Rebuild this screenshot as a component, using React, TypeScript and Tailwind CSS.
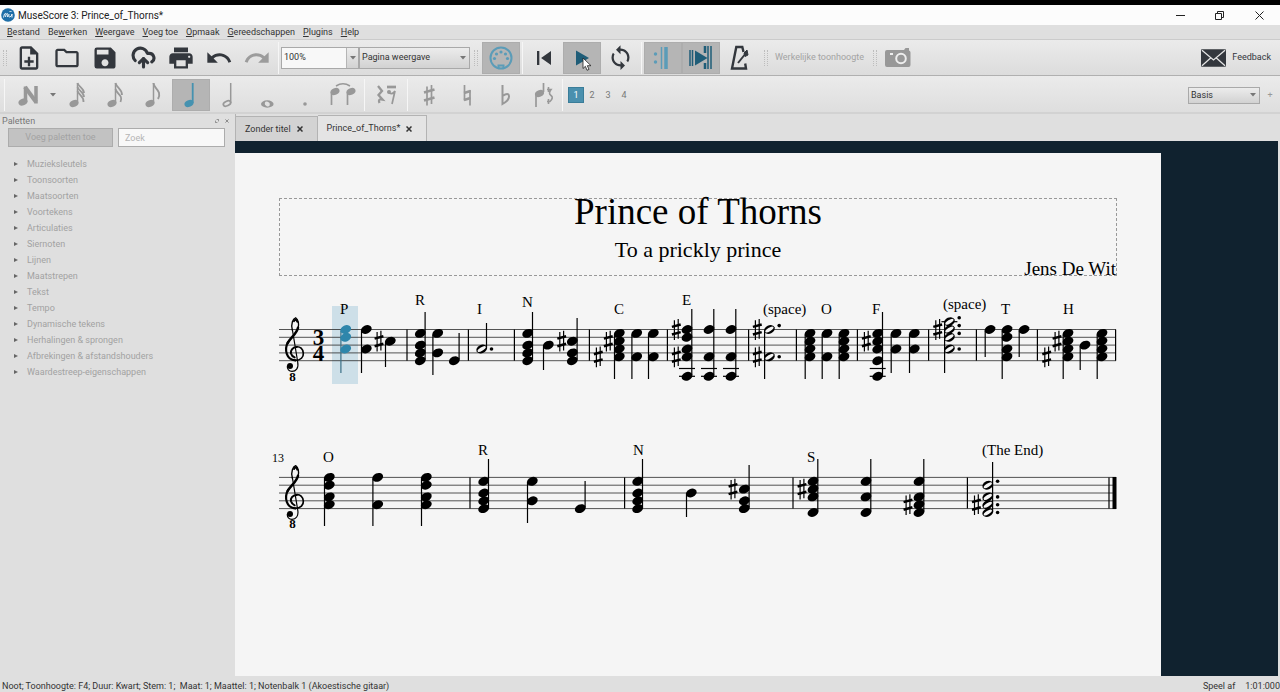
import React, { ReactNode } from 'react';
import { CloudUpload } from 'lucide-react';
import {
  MdLoop,
  MdOutlineFolder,
  MdOutlineNoteAdd,
  MdPrint,
  MdRedo,
  MdSave,
  MdSkipPrevious,
  MdUndo,
} from 'react-icons/md';

interface Chord {
  x: number;
  steps: number[];
  stem: number;
  up?: boolean;
  half?: boolean;
  selected?: boolean;
  dots?: number[];
  ledgers?: number[];
}

interface Label {
  x: number;
  y: number;
  text: string;
}

interface StaffSystem {
  top: number;
  chords: Chord[];
  sharps: [number, number][];
  bars: number[];
  labels: Label[];
}

const HALF_SPACE = 3.9;

// steps count downwards from the top staff line, two per staff space
const systems: StaffSystem[] = [
  {
    top: 329.5,
    chords: [
      { x: 345.7, steps: [0, 2, 5], stem: 373, selected: true },
      { x: 366.3, steps: [0, 5], stem: 373 },
      { x: 390.3, steps: [3], stem: 367 },
      { x: 420.3, steps: [1, 4, 6, 8], stem: 312, up: true },
      { x: 437.7, steps: [1, 6], stem: 375 },
      { x: 454.3, steps: [8], stem: 333, up: true },
      { x: 481.7, steps: [5], stem: 323, up: true, half: true, dots: [5] },
      { x: 527.7, steps: [1, 4, 6, 8], stem: 312, up: true },
      { x: 548.3, steps: [4], stem: 370 },
      { x: 572.3, steps: [3, 6, 8], stem: 318, up: true },
      { x: 619.3, steps: [1, 3, 5, 7], stem: 379 },
      { x: 636.7, steps: [1, 7], stem: 379 },
      { x: 653.3, steps: [1, 7], stem: 379 },
      { x: 687, steps: [0, 2, 5, 7, 12], stem: 309, up: true, ledgers: [10, 12] },
      { x: 709, steps: [0, 7, 12], stem: 309, up: true, ledgers: [10, 12] },
      { x: 731, steps: [0, 7, 12], stem: 309, up: true, ledgers: [10, 12] },
      { x: 769.4, steps: [0, 7], stem: 379, half: true, dots: [-1, 7] },
      { x: 810, steps: [1, 3, 5, 7], stem: 379 },
      { x: 827, steps: [1, 7], stem: 379 },
      { x: 844, steps: [1, 3, 5, 7], stem: 379 },
      { x: 877.7, steps: [1, 3, 5, 8, 12], stem: 312, up: true, ledgers: [10, 12] },
      { x: 896, steps: [1, 5], stem: 373 },
      { x: 914.3, steps: [1, 5], stem: 373 },
      { x: 949.4, steps: [-2, 0, 2, 5], stem: 373, half: true, dots: [-3, -1, 1, 5], ledgers: [-2] },
      { x: 990, steps: [0], stem: 357 },
      { x: 1007, steps: [0, 2, 5, 7], stem: 379 },
      { x: 1024, steps: [0], stem: 357 },
      { x: 1068, steps: [1, 3, 5, 7], stem: 379 },
      { x: 1085, steps: [4], stem: 370 },
      { x: 1102, steps: [1, 3, 5, 7], stem: 379 },
    ],
    sharps: [
      [379, 3], [561.7, 3], [598.3, 7], [608.3, 3], [676.3, 0], [676.3, 7],
      [757.3, 0], [757.3, 7], [866.3, 3], [937.7, 0], [1046.7, 7], [1057, 3],
    ],
    bars: [407, 468.4, 514.4, 589.4, 667.4, 748.6, 796.4, 857.4, 928.6, 976.4, 1037.4, 1115.6],
    labels: [
      { x: 340, y: 314, text: 'P' },
      { x: 415, y: 305, text: 'R' },
      { x: 477, y: 314, text: 'I' },
      { x: 522, y: 307, text: 'N' },
      { x: 614, y: 314, text: 'C' },
      { x: 682, y: 305, text: 'E' },
      { x: 763, y: 314, text: '(space)' },
      { x: 821, y: 314, text: 'O' },
      { x: 872, y: 314, text: 'F' },
      { x: 943, y: 309, text: '(space)' },
      { x: 1001, y: 314, text: 'T' },
      { x: 1063, y: 314, text: 'H' },
    ],
  },
  {
    top: 477.4,
    chords: [
      { x: 329.3, steps: [0, 2, 5, 7], stem: 526 },
      { x: 377.7, steps: [0, 7], stem: 526 },
      { x: 426.3, steps: [0, 2, 5, 7], stem: 526 },
      { x: 483.7, steps: [1, 4, 6, 8], stem: 459, up: true },
      { x: 532.3, steps: [1, 6], stem: 523 },
      { x: 580.3, steps: [8], stem: 481, up: true },
      { x: 637.7, steps: [1, 4, 6, 8], stem: 459, up: true },
      { x: 691.3, steps: [4], stem: 517 },
      { x: 744.3, steps: [3, 6, 8], stem: 465, up: true },
      { x: 813, steps: [1, 3, 5, 9], stem: 459, up: true },
      { x: 866, steps: [1, 5, 9], stem: 459, up: true },
      { x: 919, steps: [1, 5, 7, 9], stem: 459, up: true },
      { x: 987.8, steps: [2, 5, 7, 9], stem: 462, up: true, half: true, dots: [1, 5, 7, 9] },
    ],
    sharps: [[733, 3], [802, 3], [908, 7], [976.4, 7]],
    bars: [470, 624.6, 793, 967.4, 1109],
    labels: [
      { x: 323, y: 462, text: 'O' },
      { x: 478, y: 455, text: 'R' },
      { x: 633, y: 455, text: 'N' },
      { x: 807, y: 462, text: 'S' },
      { x: 982, y: 455, text: '(The End)' },
    ],
  },
];

const palettes = [
  'Muzieksleutels',
  'Toonsoorten',
  'Maatsoorten',
  'Voortekens',
  'Articulaties',
  'Siernoten',
  'Lijnen',
  'Maatstrepen',
  'Tekst',
  'Tempo',
  'Dynamische tekens',
  'Herhalingen & sprongen',
  'Afbrekingen & afstandshouders',
  'Waardestreep-eigenschappen',
];

// [before, mnemonic, after]
const menus = [
  ['', 'B', 'estand'],
  ['Be', 'w', 'erken'],
  ['', 'W', 'eergave'],
  ['', 'V', 'oeg toe'],
  ['', 'O', 'pmaak'],
  ['', 'G', 'ereedschappen'],
  ['', 'P', 'lugins'],
  ['', 'H', 'elp'],
];

function Clef({ top }: { top: number }) {
  return (
    <g transform={`translate(270 ${top - 44.4}) scale(0.3333)`} fill="none" stroke="#000" strokeLinecap="round">
      <path d="M67 133L83 230C87 250 77 259 66 259C57 259 51 252 52 243" strokeWidth="3.5" />
      <path d="M67 135C62 115 69 101 77 98C85 103 88 117 84 130" strokeWidth="4" />
      <path d="M72 108C76 101 80 103 82 110" strokeWidth="6" />
      <path d="M84 128C80 147 62 157 53 174" strokeWidth="7.5" />
      <path d="M54 171C42 194 49 224 76 226" strokeWidth="6.5" />
      <path d="M76 226C92 226 101 216 100 204C99 191 90 184 80 185" strokeWidth="5" />
      <path d="M80 186C67 187 61 196 63 205C65 212 69 215 74 217" strokeWidth="6" />
      <circle cx="60" cy="243" r="9" fill="#000" stroke="none" />
    </g>
  );
}

function ChordShape({ chord, top }: { chord: Chord; top: number }) {
  const color = chord.selected ? '#2e86ab' : '#000';
  const y = (step: number) => top + step * HALF_SPACE;
  const stemX = chord.up ? chord.x + 4.8 : chord.x - 4.8;
  const stemStart = chord.up ? y(Math.max(...chord.steps)) - 1 : y(Math.min(...chord.steps)) + 1;

  return (
    <g>
      {chord.ledgers?.map((step) => (
        <path key={step} d={`M${chord.x - 8} ${y(step)}h16`} stroke="#000" strokeWidth="1.2" />
      ))}
      <path
        d={`M${stemX} ${stemStart}V${chord.stem}`}
        stroke={chord.selected ? '#3b6f86' : '#000'}
        strokeWidth="1.2"
      />
      {chord.steps.map((step) => (
        <g key={step} transform={`translate(${chord.x} ${y(step)}) rotate(-24)`}>
          <ellipse rx="5.6" ry="4.2" fill={color} />
          {chord.half && <ellipse rx="4.7" ry="1.8" fill="#f5f5f5" transform="rotate(-8)" />}
        </g>
      ))}
      {chord.dots?.map((step) => (
        <circle key={step} cx={chord.x + 9.8} cy={y(step)} r="1.8" />
      ))}
    </g>
  );
}

function Score() {
  return (
    <svg
      viewBox="235 285 926 255"
      className="block w-full font-['Liberation_Serif',serif]"
      role="img"
      aria-label="Prince of Thorns"
    >
      <rect x="332" y="306" width="26" height="78" fill="#cddfe8" />
      {systems.map((system) => (
        <g key={system.top}>
          {[0, 2, 4, 6, 8].map((step) => (
            <path
              key={step}
              d={`M279 ${system.top + step * HALF_SPACE}H1116`}
              stroke="#2a2a2a"
              strokeWidth="0.8"
            />
          ))}
          <Clef top={system.top} />
          <text x="292.5" y={system.top + 51} fontSize="13" fontWeight="bold" textAnchor="middle">
            8
          </text>
          {system.bars.map((x) => (
            <path key={x} d={`M${x} ${system.top}v31.2`} stroke="#000" strokeWidth="1.2" />
          ))}
          {system.sharps.map(([x, step]) => (
            <g
              key={`${x}-${step}`}
              transform={`translate(${x} ${system.top + step * HALF_SPACE})`}
              stroke="#000"
            >
              <path d="M-1.9 -9.2V10.4M1.9 -10.4V9.2" strokeWidth="1.2" />
              <path d="M-4.4 -2.6L4.4 -5M-4.4 5L4.4 2.6" strokeWidth="2.5" />
            </g>
          ))}
          {system.chords.map((chord) => (
            <ChordShape key={chord.x} chord={chord} top={system.top} />
          ))}
          {system.labels.map((label) => (
            <text key={label.x} x={label.x} y={label.y} fontSize="15">
              {label.text}
            </text>
          ))}
        </g>
      ))}
      <g fontSize="23" fontWeight="bold" textAnchor="middle">
        <text x="318.5" y="345">3</text>
        <text x="318.5" y="361">4</text>
      </g>
      <text x="272" y="462" fontSize="12">
        13
      </text>
      <path d="M1114.5 477v32" stroke="#000" strokeWidth="4" />
    </svg>
  );
}

function IconButton({ label, pressed, children }: { label: string; pressed?: boolean; children: ReactNode }) {
  return (
    <button
      aria-label={label}
      aria-pressed={pressed}
      className={`relative flex h-8 w-[38px] shrink-0 items-center justify-center ${
        pressed ? 'border border-[#adadad] bg-[#b5b5b5]' : ''
      }`}
    >
      {children}
    </button>
  );
}

function Glyph({ children, color = '#989898' }: { children: ReactNode; color?: string }) {
  return (
    <svg width="38" height="32" viewBox="0 0 38 32" fill="none" stroke={color} className="shrink-0">
      {children}
    </svg>
  );
}

function Head({ x, y, color = '#989898', hollow }: { x: number; y: number; color?: string; hollow?: boolean }) {
  return (
    <ellipse
      cx={x}
      cy={y}
      rx={hollow ? 3.9 : 4.7}
      ry={hollow ? 2.3 : 3.3}
      fill={hollow ? 'none' : color}
      stroke={hollow ? color : 'none'}
      strokeWidth="1.7"
      transform={`rotate(-25 ${x} ${y})`}
    />
  );
}

function Separator() {
  return <div className="h-8 w-px shrink-0 bg-[#f6f6f6]" />;
}

function Grip() {
  return <div className="h-4 w-1 shrink-0 border-x border-dotted border-[#bdbdbd]" />;
}

function Caret({ className = '' }: { className?: string }) {
  return (
    <svg width="6" height="4" viewBox="0 0 6 4" className={className}>
      <path d="M0 0h6L3 3.5z" fill="#777" />
    </svg>
  );
}

function Dropdown({ label, value, className }: { label: string; value: string; className: string }) {
  return (
    <div className={`relative shrink-0 ${className}`}>
      <select
        aria-label={label}
        className="h-full w-full appearance-none border border-[#a9a9a9] bg-linear-to-b from-[#ececec] to-[#d2d2d2] pl-[2px] text-[#333]"
      >
        <option>{value}</option>
      </select>
      <Caret className="pointer-events-none absolute top-1/2 right-1 -translate-y-1/2" />
    </div>
  );
}

function Toolbar() {
  return (
    <div className="flex h-[37px] shrink-0 items-center border-t border-b border-t-[#cbcbcb] border-b-[#b0b0b0] bg-linear-to-b from-[#ebebeb] to-[#dcdcdc] text-[#33373d]">
      <div className="flex w-[10px] shrink-0 justify-center">
        <Grip />
      </div>
      <IconButton label="Nieuw"><MdOutlineNoteAdd size={28} /></IconButton>
      <IconButton label="Openen"><MdOutlineFolder size={28} /></IconButton>
      <IconButton label="Opslaan"><MdSave size={28} /></IconButton>
      <IconButton label="Online opslaan"><CloudUpload size={25} strokeWidth={3} /></IconButton>
      <IconButton label="Afdrukken"><MdPrint size={28} /></IconButton>
      <IconButton label="Ongedaan maken"><MdUndo size={28} /></IconButton>
      <IconButton label="Opnieuw"><MdRedo size={28} className="text-[#9c9c9c]" /></IconButton>
      <div className="mx-[2px]">
        <Separator />
      </div>
      <div className="relative h-[22px] w-[78px] shrink-0">
        <select
          aria-label="Zoom"
          className="h-full w-full appearance-none border border-[#a9a9a9] bg-[#f8f8f8] pl-[2px] text-[#333]"
        >
          <option>100%</option>
        </select>
        <div className="pointer-events-none absolute inset-y-px right-px flex w-3 items-center justify-center border-l border-[#b5b5b5] bg-linear-to-b from-[#ececec] to-[#d2d2d2]">
          <Caret />
        </div>
      </div>
      <Dropdown label="Weergave" value="Pagina weergave" className="h-[22px] w-[111px]" />
      <div className="flex w-3 shrink-0 justify-center">
        <Grip />
      </div>
      <IconButton label="MIDI-invoer" pressed>
        <Glyph color="#5b9cb8">
          <circle cx="19" cy="16" r="10.5" strokeWidth="2" />
          <path d="M16.5 26v-2.5h5V26" strokeWidth="2" />
          <g fill="#5b9cb8" stroke="none">
            <circle cx="12.5" cy="16.5" r="1.6" />
            <circle cx="14.5" cy="12" r="1.6" />
            <circle cx="19" cy="10" r="1.6" />
            <circle cx="23.5" cy="12" r="1.6" />
            <circle cx="25.5" cy="16.5" r="1.6" />
          </g>
        </Glyph>
      </IconButton>
      <div className="mx-[2px]">
        <Separator />
      </div>
      <IconButton label="Naar begin"><MdSkipPrevious size={28} /></IconButton>
      <IconButton label="Afspelen" pressed>
        <Glyph>
          <path d="M13 8.5v15L26 16z" fill="#1f5d78" stroke="none" />
        </Glyph>
        <svg width="10" height="14" viewBox="0 0 10 14" className="absolute top-[14px] left-[18px]">
          <path
            d="M1 1v10.5l2.4-2.2L5 13.3l2-.9-1.7-3.7H9z"
            fill="#fff"
            stroke="#222"
            strokeWidth="0.8"
          />
        </svg>
      </IconButton>
      <IconButton label="Herhalen"><MdLoop size={27} /></IconButton>
      <div className="mx-[2px]">
        <Separator />
      </div>
      <IconButton label="Herhalingen afspelen" pressed>
        <Glyph color="#5b9cb8">
          <path d="M17.5 5v22" strokeWidth="1.5" />
          <path d="M22 5v22" strokeWidth="3.5" />
          <g fill="#5b9cb8" stroke="none">
            <circle cx="11.5" cy="12" r="1.7" />
            <circle cx="11.5" cy="20" r="1.7" />
          </g>
        </Glyph>
      </IconButton>
      <IconButton label="Panorama" pressed>
        <Glyph color="#1f5d78">
          <path d="M8 8v16M10.5 8v16" strokeWidth="1.5" />
          <path d="M23 4v7M23 21v6" strokeWidth="2.5" />
          <path d="M26 4v23M29 4v23" strokeWidth="1.5" />
          <path d="M13 8.5v15L25.5 16z" fill="#1f5d78" stroke="none" />
        </Glyph>
      </IconButton>
      <IconButton label="Metronoom">
        <Glyph color="#33373d">
          <path d="M23.5 10l-1.2-5h-6L12 26.500h14l-.8-5" strokeWidth="2.4" />
          <path d="M18 21l8-10" strokeWidth="2" />
          <path d="M24 11l3-3 1 5-3 1.500z" fill="#33373d" />
        </Glyph>
      </IconButton>
      <div className="ml-[3px] flex w-[10px] shrink-0 justify-center">
        <Grip />
      </div>
      <button className="ml-1 shrink-0 text-[#a3a3a3]" disabled>
        Werkelijke toonhoogte
      </button>
      <div className="ml-2 flex w-[6px] shrink-0 justify-center">
        <Grip />
      </div>
      <button aria-label="Schermopname" className="ml-[7px] shrink-0">
        <svg width="26" height="20" viewBox="0 0 26 20">
          <path
            d="M2 2h17l1.500-2H24v2.500q1.500.500 1.500 2V17q0 2-2 2H2q-2 0-2-2V4q0-2 2-2z"
            fill="#989898"
          />
          <circle cx="16" cy="10.5" r="4.8" fill="#989898" stroke="#eee" strokeWidth="2" />
          <rect x="5" y="5" width="3" height="2" fill="#eee" />
        </svg>
      </button>
      <button className="mr-[9px] ml-auto flex shrink-0 items-center gap-[6px]">
        <svg width="25" height="18" viewBox="0 0 26 18">
          <rect width="26" height="18" rx="1" fill="#33373d" />
          <path d="M1 1l12 10L25 1M1 17l9-8M25 17l-9-8" fill="none" stroke="#e6e6e6" strokeWidth="1.3" />
        </svg>
        Feedback
      </button>
    </div>
  );
}

function NoteToolbar() {
  return (
    <div className="flex h-[38px] shrink-0 items-center border-b-2 border-[#d2d2d2] bg-linear-to-b from-[#ebebeb] to-[#dedede] pt-[2px]">
      <div className="flex w-[9px] shrink-0 justify-center">
        <Separator />
      </div>
      <IconButton label="Nooteninvoer">
        <Glyph>
          <path d="M16.500 23V7.500M27 7v17.500" strokeWidth="3.500" />
          <path d="M16 8l11 15" strokeWidth="4" />
          <Head x={14} y={23} />
        </Glyph>
      </IconButton>
      <div className="flex w-[11px] shrink-0 justify-center">
        <Caret />
      </div>
      <IconButton label="32e noot">
        <Glyph>
          <Head x={16} y={24.5} />
          <path d="M19.5 4v20" strokeWidth="1.5" />
          <path d="M19.5 4c1 4 6.5 5 6.5 10M19.5 8c1 4 6.5 5 6.5 10M19.5 12c1 4 6.500 5 6 11" strokeWidth="1.8" />
        </Glyph>
      </IconButton>
      <IconButton label="16e noot">
        <Glyph>
          <Head x={16} y={24.5} />
          <path d="M19.5 4v20" strokeWidth="1.5" />
          <path d="M19.5 4c1 5 6.5 5.500 6.5 12M19.5 10c1 5 8 6 5 13" strokeWidth="1.8" />
        </Glyph>
      </IconButton>
      <IconButton label="Achtste noot">
        <Glyph>
          <Head x={16} y={24.5} />
          <path d="M19.5 4v20" strokeWidth="1.5" />
          <path d="M19.5 4c0 6 9 7 4.5 16" strokeWidth="1.9" />
        </Glyph>
      </IconButton>
      <IconButton label="Kwartnoot" pressed>
        <Glyph>
          <Head x={17} y={24.5} color="#4592b0" />
          <path d="M20.700 4v20" stroke="#4592b0" strokeWidth="1.8" />
        </Glyph>
      </IconButton>
      <IconButton label="Halve noot">
        <Glyph>
          <Head x={17} y={24.5} hollow />
          <path d="M20.700 4v20" strokeWidth="1.5" />
        </Glyph>
      </IconButton>
      <IconButton label="Hele noot">
        <Glyph>
          <path
            d="M13 25a6.300 3.700 0 1 0 12.600 0a6.300 3.700 0 1 0-12.600 0zM16.800 24a2.400 1.900 35 1 1 5 2a2.400 1.900 35 1 1-5-2z"
            fill="#989898"
            fillRule="evenodd"
            stroke="none"
          />
        </Glyph>
      </IconButton>
      <IconButton label="Punt">
        <Glyph>
          <circle cx="19" cy="25" r="1.8" fill="#989898" stroke="none" />
        </Glyph>
      </IconButton>
      <IconButton label="Overbinding">
        <Glyph>
          <Head x={11} y={12.5} />
          <Head x={27} y={12.5} />
          <path d="M7.5 13v13M23.5 13v13" strokeWidth="1.7" />
          <path d="M12 7q7-4.500 14 0" strokeWidth="1.5" />
        </Glyph>
      </IconButton>
      <div className="mx-[2px]">
        <Separator />
      </div>
      <IconButton label="Rust">
        <Glyph>
          <path d="M11 7l4 5-3.500 4 4 4.500q-5-1-3 3.500" strokeWidth="2.300" />
          <path d="M20 8h9" strokeWidth="2.700" />
          <path d="M22 14q4 2 6-2l-3 13" strokeWidth="1.700" />
          <circle cx="22" cy="13" r="2" fill="#989898" stroke="none" />
        </Glyph>
      </IconButton>
      <div className="mx-[2px]">
        <Separator />
      </div>
      <IconButton label="Kruis">
        <Glyph>
          <path d="M17 7.500v19M21.500 6v19" strokeWidth="1.700" />
          <path d="M14 13.500l10.500-3M14 21.500l10.500-3" strokeWidth="2.600" />
        </Glyph>
      </IconButton>
      <IconButton label="Herstellingsteken">
        <Glyph>
          <path d="M16.500 6v15.500M22 11v15.500" strokeWidth="1.700" />
          <path d="M16 14l6.500-2M16 21l6.500-2" strokeWidth="2.600" />
        </Glyph>
      </IconButton>
      <IconButton label="Mol">
        <Glyph>
          <path d="M16.500 6v19q7-4 6.500-8t-6.500 0" strokeWidth="2" />
        </Glyph>
      </IconButton>
      <IconButton label="Richting omkeren">
        <Glyph>
          <Head x={15.5} y={14.5} />
          <path d="M12 15v13M19.500 13V4" strokeWidth="1.700" />
          <path d="M23 10.500h4q-3 4 0 6t-1 6h-3M24.500 8v5M24.500 20v5" strokeWidth="1.600" />
        </Glyph>
      </IconButton>
      <div className="mr-[5px]">
        <Separator />
      </div>
      <button className="h-4 w-4 border border-[#3a7d99] bg-[#4a90ae] text-white">1</button>
      {[2, 3, 4].map((voice) => (
        <button key={voice} className="h-4 w-4 text-[#777]">
          {voice}
        </button>
      ))}
      <Dropdown label="Werkruimte" value="Basis" className="ml-auto h-[17px] w-[72px]" />
      <button aria-label="Werkruimte toevoegen" className="w-5 text-[#999]">
        +
      </button>
    </div>
  );
}

function Sidebar() {
  return (
    <aside className="flex w-[235px] shrink-0 flex-col text-[#a2a2a2]">
      <div className="flex h-[14px] items-center pr-[5px] pl-[2px] text-[#777]">
        <h2 className="grow">Paletten</h2>
        <button aria-label="Losmaken" className="w-[10px]">
          <svg width="4" height="4" viewBox="0 0 5 5" fill="none" stroke="#777">
            <path d="M2 .5h2.500V3M.5 2v2.500H3" />
          </svg>
        </button>
        <button aria-label="Sluiten" className="w-[5px]">
          <svg width="4" height="4" viewBox="0 0 5 5" stroke="#777">
            <path d="M.5.500l4 4M4.500.500l-4 4" />
          </svg>
        </button>
      </div>
      <div className="flex gap-[5px] pr-[10px] pl-2">
        <button className="h-[19px] w-[105px] border border-[#acacac] bg-[#c2c2c2]">Voeg paletten toe</button>
        <input
          aria-label="Zoek"
          placeholder="Zoek"
          className="h-[19px] w-[107px] border border-[#acacac] bg-[#f8f8f8] px-[6px] placeholder:text-[#b5b5b5]"
        />
      </div>
      <ul className="mt-[9px]">
        {palettes.map((name) => (
          <li key={name}>
            <button className="flex h-4 items-center gap-[9px] pl-[14px]">
              <svg width="4" height="4" viewBox="0 0 4 4">
                <path d="M0 0l4 2-4 2z" fill="#666" />
              </svg>
              {name}
            </button>
          </li>
        ))}
      </ul>
    </aside>
  );
}

function Tab({ name, active }: { name: string; active?: boolean }) {
  return (
    <div
      className={`flex items-center gap-[6px] border-t border-r border-[#b3b3b3] pr-[14px] pl-[9px] text-[#333] ${
        active ? 'h-[26px] bg-[#e4e4e4]' : 'h-[25px] bg-[#d3d3d3]'
      }`}
    >
      <button>{name}</button>
      <button aria-label={`${name} sluiten`}>
        <svg width="6" height="6" viewBox="0 0 6 6" stroke="#333" strokeWidth="1.5">
          <path d="M.5.500l5 5M5.500.500l-5 5" />
        </svg>
      </button>
    </div>
  );
}

export default function App() {
  return (
    <div className="flex h-screen flex-col overflow-hidden bg-[#dfdfdf] font-[Roboto,sans-serif] text-[9px] leading-[13px] text-[#333]">
      <div className="h-[5px] shrink-0 bg-black" />
      <header className="flex h-5 shrink-0 items-center bg-[#fcfcfc] pl-px">
        <svg width="14" height="14" viewBox="0 0 14 14" fill="none" stroke="#fff">
          <circle cx="7" cy="7" r="6.8" fill="#1f6fa8" stroke="none" />
          <path
            d="M2.5 9.500L3.500 6q1.500-1.500 1.500.500L4.500 9M5 6.500q2-2 1.800 0L6.500 9M8 6q-1 3.500.800 3T11 6M11 6v3.500M8.500 4l1-1 1 1"
            strokeWidth="0.9"
          />
        </svg>
        <h1 className="ml-[3px] grow text-[10px] text-[#222]">MuseScore 3: Prince_of_Thorns*</h1>
        <div className="flex">
          <button aria-label="Minimaliseren" className="flex w-[39px] justify-center">
            <svg width="9" height="9" viewBox="0 0 9 9" stroke="#222">
              <path d="M0 4.500h9" />
            </svg>
          </button>
          <button aria-label="Verkleinen" className="flex w-[39px] justify-center">
            <svg width="9" height="9" viewBox="0 0 9 9" fill="none" stroke="#222">
              <path d="M.5 2.500h6v6h-6zM2.500 2V.5h6v6H7" />
            </svg>
          </button>
          <button aria-label="Sluiten" className="flex w-[41px] justify-center">
            <svg width="9" height="9" viewBox="0 0 9 9" stroke="#222">
              <path d="M.5.500l8 8M8.500.500l-8 8" />
            </svg>
          </button>
        </div>
      </header>
      <nav className="flex h-[14px] shrink-0 items-center gap-2 pl-[7px]">
        {menus.map(([before, key, after]) => (
          <button key={key + after}>
            {before}
            <u>{key}</u>
            {after}
          </button>
        ))}
      </nav>
      <Toolbar />
      <NoteToolbar />
      <div className="flex min-h-0 grow">
        <Sidebar />
        <main className="flex min-w-0 grow flex-col">
          <div className="flex h-[27px] shrink-0 items-end border-l border-[#b3b3b3]">
            <Tab name="Zonder titel" />
            <Tab name="Prince_of_Thorns*" active />
          </div>
          <div className="mr-[2px] min-h-0 grow overflow-hidden bg-[#10222f] pt-3">
            <article className="h-full w-[926px] bg-[#f5f5f5] pt-[45px] font-['Liberation_Serif',serif] text-black">
              <div className="mx-11 flex h-[78px] flex-col items-center border border-dashed border-[#999]">
                <h2 className="text-[37px] leading-[26px]">Prince of Thorns</h2>
                <p className="mt-3 text-[22px] leading-[26px]">To a prickly prince</p>
                <p className="self-end text-[19px] leading-[12px]">Jens De Wit</p>
              </div>
              <div className="mt-[9px]">
                <Score />
              </div>
            </article>
          </div>
        </main>
      </div>
      <footer className="flex h-4 shrink-0 items-center justify-between pt-1 pl-[2px]">
        <span className="whitespace-pre">
          Noot; Toonhoogte: F4; Duur: Kwart; Stem: 1;  Maat: 1; Maattel: 1; Notenbalk 1 (Akoestische gitaar)
        </span>
        <span className="flex gap-[10px]">
          <span>Speel af</span>
          <span>1:01:000</span>
        </span>
      </footer>
    </div>
  );
}
